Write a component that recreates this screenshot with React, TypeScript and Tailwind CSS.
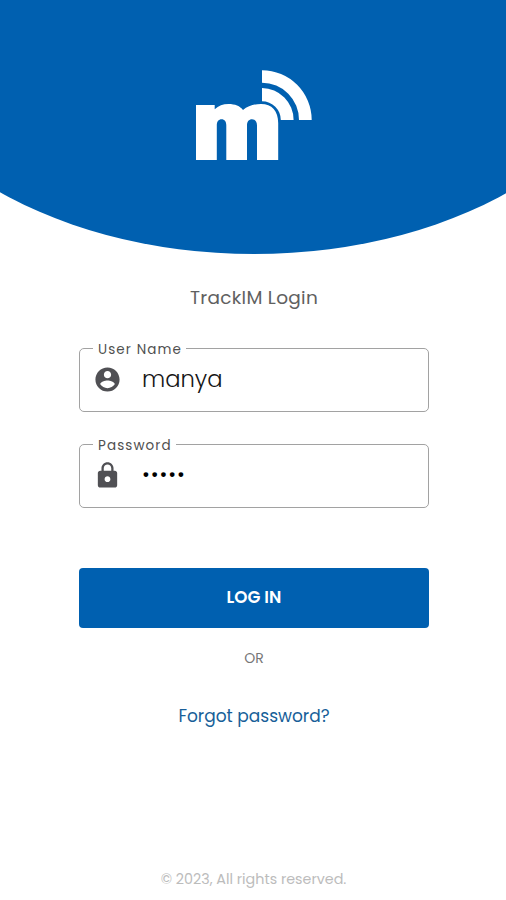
import type { ReactNode } from "react";

function Logo() {
  return (
    <svg width="116" height="92" viewBox="0 0 116 92" fill="#fff" aria-label="TrackIM">
      <path d="M0 35H18.7V39.3C22.5 35.8 27 34 32.5 34C39 34 44 36 47 40C52 36 58 34 65 34C76 34 82.2 41 82.2 53V90H61V55.5C61 51.5 59 49.3 56 49.3C53 49.3 51 51.5 51 55.5V90H30.3V55.5C30.3 51.5 28.5 49.3 25.6 49.3C22.6 49.3 20.8 51.5 20.8 55.5V90H0Z" />
      <path d="M66 .3A49.7 49.7 0 0 1 115.7 50H103A37 37 0 0 0 66 12.7Z" />
      <path d="M66 18A32 32 0 0 1 97.6 50H84.8A18.8 18.8 0 0 0 66 31.2Z" />
    </svg>
  );
}

function Field({ label, icon, children }: { label: string; icon: ReactNode; children: ReactNode }) {
  return (
    <fieldset className="h-[71px] w-[350px] rounded-[5px] border border-[#a2a2a2] pl-[13px]">
      <legend className="h-[14px] pr-[4px] pl-[5px] text-[13.5px] leading-[18px] tracking-[1.1px] text-[#505050]">{label}</legend>
      <div className="mt-[9px] flex h-[30px] items-center">
        {icon}
        {children}
      </div>
    </fieldset>
  );
}

export default function App() {
  return (
    <main className="flex h-[900px] w-[506px] flex-col items-center overflow-hidden bg-white font-['Poppins','Inter',sans-serif]">
      <header className="flex h-[254px] w-full shrink-0 items-end justify-center overflow-hidden bg-white pl-[2px]">
        <div className="flex h-[500px] w-[772px] shrink-0 items-end justify-center rounded-[50%] bg-[#0060b0] pb-[92px]">
          <Logo />
        </div>
      </header>

      <h1 className="mt-[31px] h-[26px] pl-[2px] text-[18.5px] leading-[26px] tracking-[0.3px] text-[#606060]">TrackIM Login</h1>

      <form className="mt-[30px] flex flex-col items-center pl-[2px]" onSubmit={(e) => e.preventDefault()}>
        <Field
          label="User Name"
          icon={
            <svg className="size-[29px] shrink-0" viewBox="0 0 24 24" fill="#505054">
              <path d="M12 2C6.48 2 2 6.48 2 12s4.48 10 10 10 10-4.48 10-10S17.52 2 12 2zm0 3c1.66 0 3 1.34 3 3s-1.34 3-3 3-3-1.34-3-3 1.34-3 3-3zm0 14.2c-2.5 0-4.71-1.28-6-3.22.03-1.99 4-3.08 6-3.08 1.99 0 5.97 1.09 6 3.08-1.29 1.94-3.5 3.22-6 3.22z" />
            </svg>
          }
        >
          <span className="pl-[20px] text-[22.7px] leading-[30px] font-light text-[#151515]">manya</span>
        </Field>
        <div className="h-[25px]" />
        <Field
          label="Password"
          icon={
            <svg className="size-[29px] shrink-0" viewBox="0 0 24 24" fill="#505054">
              <path d="M18 8h-1V6c0-2.76-2.24-5-5-5S7 3.24 7 6v2H6c-1.1 0-2 .9-2 2v10c0 1.1.9 2 2 2h12c1.1 0 2-.9 2-2V10c0-1.1-.9-2-2-2zm-6 9.4c-1.33 0-2.4-1.07-2.4-2.4s1.07-2.4 2.4-2.4 2.4 1.07 2.4 2.4-1.07 2.4-2.4 2.4zm3.1-9.4H8.9V6c0-1.71 1.39-3.1 3.1-3.1 1.71 0 3.1 1.39 3.1 3.1v2z" />
            </svg>
          }
        >
          <span className="pl-[20px] text-[19px] leading-[30px] tracking-[0.9px] text-black">•••••</span>
        </Field>

        <button className="mt-[60px] h-[60px] w-[350px] rounded-[4px] bg-[#0060b0] text-[16.8px] font-semibold text-white">
          LOG IN
        </button>
      </form>

      <p className="mt-[20px] h-[20px] pl-[2px] text-[14px] leading-[20px] text-[#777]">OR</p>
      <a className="mt-[36px] h-[24px] pl-[2px] text-[17px] leading-[24px] text-[#185f99]">Forgot password?</a>
      <footer className="mt-auto mb-[11px] h-[20px] pl-[1px] text-[14.3px] leading-[20px] text-[#bcbcbc]">© 2023, All rights reserved.</footer>
    </main>
  );
}
